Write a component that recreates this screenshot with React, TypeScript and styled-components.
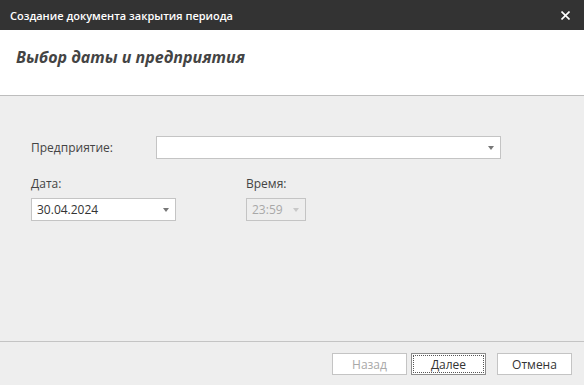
import React from 'react';
import styled, { createGlobalStyle } from 'styled-components';

const GlobalStyle = createGlobalStyle`
  html, body {
    margin: 0;
    padding: 0;
    height: 100%;
  }
  body {
    font-family: "Open Sans", "Noto Sans", sans-serif;
    font-size: 12px;
    color: #444444;
    background: #eeeeee;
  }
`;

const Window = styled.div`
  display: flex;
  flex-direction: column;
  width: 584px;
  height: 385px;
  background: #eeeeee;
  overflow: hidden;
`;

const TitleBar = styled.div`
  display: flex;
  align-items: center;
  justify-content: space-between;
  height: 30px;
  padding: 0 14px 0 10px;
  background: #333333;
  color: #ffffff;
  font-size: 11px;
  font-weight: 600;
  flex-shrink: 0;
`;

const CloseButton = styled.button`
  display: flex;
  align-items: center;
  justify-content: center;
  padding: 0;
  border: none;
  background: transparent;
  cursor: pointer;
`;

const Header = styled.div`
  display: flex;
  align-items: flex-start;
  height: 66px;
  box-sizing: border-box;
  padding: 16px 16px 0;
  background: #ffffff;
  border-bottom: 1px solid #bdbdbd;
  flex-shrink: 0;
`;

const HeaderTitle = styled.h1`
  margin: 0;
  font-size: 16px;
  line-height: 22px;
  font-weight: 700;
  font-style: italic;
  color: #444444;
`;

const Body = styled.div`
  flex: 1;
  display: flex;
  flex-direction: column;
  padding: 40px 31px 0;
`;

const Row = styled.div`
  display: flex;
  align-items: center;
`;

const Label = styled.label<{ $width?: number }>`
  width: ${({ $width }) => ($width ? `${$width}px` : 'auto')};
  color: #444444;
  font-size: 12px;
`;

const FieldsRow = styled.div`
  display: flex;
  gap: 70px;
  margin-top: 16px;
`;

const Field = styled.div`
  display: flex;
  flex-direction: column;
  gap: 6px;
`;

const Select = styled.div<{ $width: number; $disabled?: boolean }>`
  box-sizing: border-box;
  display: flex;
  align-items: center;
  justify-content: space-between;
  width: ${({ $width }) => $width}px;
  height: 23px;
  padding: 0 6px 0 5px;
  border: 1px solid #c4c4c4;
  background: ${({ $disabled }) => ($disabled ? '#eeeeee' : '#ffffff')};
  color: ${({ $disabled }) => ($disabled ? '#a8a8a8' : '#333333')};
  font-size: 12px;
`;

const Arrow = styled.span<{ $disabled?: boolean }>`
  width: 0;
  height: 0;
  border-left: 3.5px solid transparent;
  border-right: 3.5px solid transparent;
  border-top: 4px solid ${({ $disabled }) => ($disabled ? '#c8c8c8' : '#777777')};
`;

const Footer = styled.div`
  display: flex;
  justify-content: flex-end;
  align-items: flex-start;
  height: 44px;
  padding: 11px 12px 0 0;
  box-sizing: border-box;
  border-top: 1px solid #c4c4c4;
  flex-shrink: 0;
`;

const Button = styled.button<{ $focused?: boolean; $gap?: number }>`
  box-sizing: border-box;
  position: relative;
  width: 75px;
  height: 22px;
  margin-left: ${({ $gap }) => $gap ?? 0}px;
  padding: 0;
  border: 1px solid ${({ $focused }) => ($focused ? '#8c8c8c' : '#c4c4c4')};
  background: #ffffff;
  color: #333333;
  font-family: "Open Sans", "Noto Sans", sans-serif;
  font-size: 12px;
  cursor: pointer;

  &:disabled {
    color: #a8a8a8;
    cursor: default;
  }

  ${({ $focused }) =>
    $focused &&
    `
    &::after {
      content: '';
      position: absolute;
      inset: 1px;
      border: 1px dotted #555555;
    }
  `}
`;

function App() {
  return (
    <>
      <GlobalStyle />
      <Window>
        <TitleBar>
          <span>Создание документа закрытия периода</span>
          <CloseButton aria-label="Закрыть">
            <svg width="9" height="9" viewBox="0 0 9 9">
              <path d="M0.5 0.5 L8.5 8.5 M8.5 0.5 L0.5 8.5" stroke="#ffffff" strokeWidth="1.6" />
            </svg>
          </CloseButton>
        </TitleBar>

        <Header>
          <HeaderTitle>Выбор даты и предприятия</HeaderTitle>
        </Header>

        <Body>
          <Row>
            <Label $width={125}>Предприятие:</Label>
            <Select $width={345}>
              <span />
              <Arrow />
            </Select>
          </Row>

          <FieldsRow>
            <Field>
              <Label>Дата:</Label>
              <Select $width={145}>
                <span>30.04.2024</span>
                <Arrow />
              </Select>
            </Field>
            <Field>
              <Label>Время:</Label>
              <Select $width={60} $disabled>
                <span>23:59</span>
                <Arrow $disabled />
              </Select>
            </Field>
          </FieldsRow>
        </Body>

        <Footer>
          <Button disabled>Назад</Button>
          <Button $focused $gap={4}>Далее</Button>
          <Button $gap={11}>Отмена</Button>
        </Footer>
      </Window>
    </>
  );
}

export default App;
